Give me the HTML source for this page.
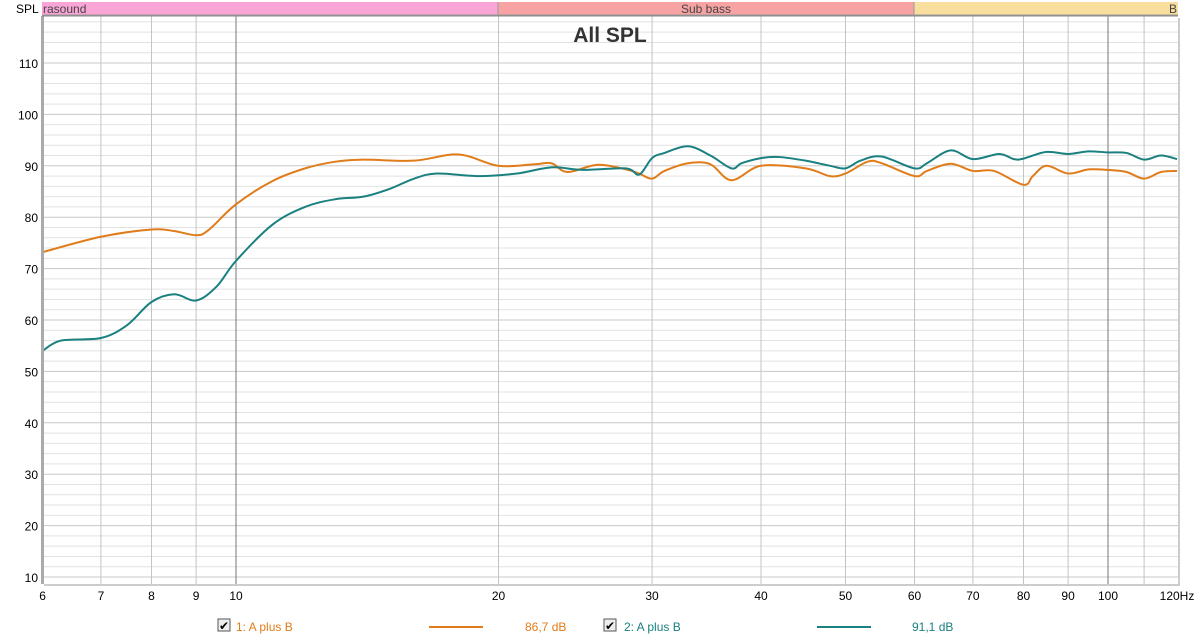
<!DOCTYPE html>
<html><head><meta charset="utf-8"><style>
body{margin:0;width:1200px;height:641px;background:#fff;overflow:hidden;font-family:"Liberation Sans",sans-serif}
svg{position:absolute;left:0;top:0}
</style></head><body>
<svg id="s" width="1200" height="641" xmlns="http://www.w3.org/2000/svg" font-family="Liberation Sans, sans-serif">
<rect x="42" y="2" width="456" height="13" fill="#f9a5d6"/>
<rect x="498" y="2" width="416" height="13" fill="#f7a3a3"/>
<rect x="914" y="2" width="264" height="13" fill="#f9df9e"/>
<line x1="42" y1="15" x2="1178" y2="15" stroke="#999"/>
<line x1="498" y1="2" x2="498" y2="15" stroke="#999"/>
<line x1="914" y1="2" x2="914" y2="15" stroke="#999"/>
<text x="43" y="13" font-size="12" fill="#444">rasound</text>
<text x="706" y="13" font-size="12" fill="#444" text-anchor="middle">Sub bass</text>
<text x="1177" y="13" font-size="12" fill="#444" text-anchor="end">B</text>
<text x="16" y="13" font-size="12" fill="#000">SPL</text>
<rect x="44" y="18" width="1136" height="568" fill="#ccc"/>
<rect x="42" y="16" width="1136" height="568" fill="#fff"/>
<g id="grid"></g>
<text x="610" y="42" font-size="21" font-weight="bold" fill="#333" text-anchor="middle">All SPL</text>
<g id="curves"></g>
<rect x="41" y="16" width="3" height="568" fill="#aaa"/>
<line x1="42" y1="16" x2="1178" y2="16" stroke="#888"/>
<rect x="218" y="619" width="12" height="12" fill="#eee" stroke="#555"/>
<text x="219" y="630" font-size="12">✔</text>
<text x="236" y="631" font-size="12" fill="#e07c1a">1: A plus B</text>
<line x1="429" y1="627" x2="483" y2="627" stroke="#e07c1a" stroke-width="2"/>
<text x="525" y="631" font-size="12" fill="#e07c1a">86,7 dB</text>
<rect x="604" y="619" width="12" height="12" fill="#eee" stroke="#555"/>
<text x="605" y="630" font-size="12">✔</text>
<text x="624" y="631" font-size="12" fill="#1a8080">2: A plus B</text>
<line x1="817" y1="627" x2="871" y2="627" stroke="#1a8080" stroke-width="2"/>
<text x="912" y="631" font-size="12" fill="#1a8080">91,1 dB</text>
</svg>
<script>
var NS="http://www.w3.org/2000/svg";
function X(f){return 236+872*Math.log10(f/10);}
function Y(d){return 63+(110-d)*5.14;}
function el(p,t,a,txt){var e=document.createElementNS(NS,t);for(var k in a)e.setAttribute(k,a[k]);if(txt)e.textContent=txt;p.appendChild(e);return e;}
var g=document.getElementById('grid');
for(var d=10;d<=118;d+=2){var y=Y(d);el(g,'line',{x1:42,x2:1178,y1:y,y2:y,stroke:d%10==0?'#c8c8c8':'#e2e2e2'});}
for(var d=10;d<=110;d+=10){el(g,'text',{x:38,y:Y(d)+5,'font-size':12,'text-anchor':'end'},''+d);}
var fs=[6,7,8,9,10,20,30,40,50,60,70,80,90,100,110,120];
fs.forEach(function(f){var x=X(f);var c=(f==10||f==100)?'#777':'#c4c4c4';if(f>6&&f<120)el(g,'line',{x1:x,x2:x,y1:16,y2:584,stroke:c});
 if(f!=110){var lab=f==120?'120Hz':''+f;el(g,'text',{x:f==120?1177:x,y:600,'font-size':12,'text-anchor':'middle'},lab);}});
function path(pts){var P=pts.map(function(p){return [X(p[0]),Y(p[1])];});var s='M'+P[0][0]+','+P[0][1];
for(var i=0;i<P.length-1;i++){var p0=P[i-1]||P[i],p1=P[i],p2=P[i+1],p3=P[i+2]||P[i+1];
s+=' C'+(p1[0]+(p2[0]-p0[0])/6)+','+(p1[1]+(p2[1]-p0[1])/6)+' '+(p2[0]-(p3[0]-p1[0])/6)+','+(p2[1]-(p3[1]-p1[1])/6)+' '+p2[0]+','+p2[1];}return s;}
var o=[[6,73.2],[7,76.2],[8,77.6],[8.5,77.3],[9,76.5],[9.3,77.5],[10,82.5],[11,87],[12,89.5],[13,90.8],[14,91.2],[16,91],[18,92.2],[20,90],[22,90.3],[23,90.5],[24,88.8],[26,90.2],[28,89.3],[29,88.5],[30,87.5],[31,89],[33,90.5],[35,90.3],[37,87.2],[40,90],[45,89.5],[48,88],[50,88.5],[53,90.8],[55,90.5],[60,88],[62,89],[66,90.4],[70,89],[74,89],[80,86.3],[82,88],[85,90],[90,88.5],[95,89.3],[100,89.2],[105,88.8],[110,87.5],[115,88.8],[120,89]];
var t=[[6,54],[6.3,56],[7,56.5],[7.5,59],[8,63.5],[8.5,65],[9,63.8],[9.5,66.5],[10,71.5],[11,78.5],[12,82],[13,83.5],[14,84],[15,85.5],[16,87.5],[17,88.5],[19,88],[21,88.5],[23,89.7],[25,89.2],[28,89.5],[29,88.3],[30,91.5],[31,92.5],[33,93.8],[35,92],[37,89.5],[38,90.5],[40,91.5],[42,91.7],[45,91],[48,90],[50,89.5],[52,91],[55,91.8],[60,89.5],[62,90.5],[66,93],[70,91.3],[75,92.3],[78,91.3],[80,91.4],[85,92.7],[90,92.3],[95,92.8],[100,92.6],[105,92.5],[110,91.2],[115,92],[120,91.3]];
var c=document.getElementById('curves');
el(c,'path',{d:path(o),fill:'none',stroke:'#e07c1a','stroke-width':2});
el(c,'path',{d:path(t),fill:'none',stroke:'#1a8080','stroke-width':2});
</script>
</body></html>
